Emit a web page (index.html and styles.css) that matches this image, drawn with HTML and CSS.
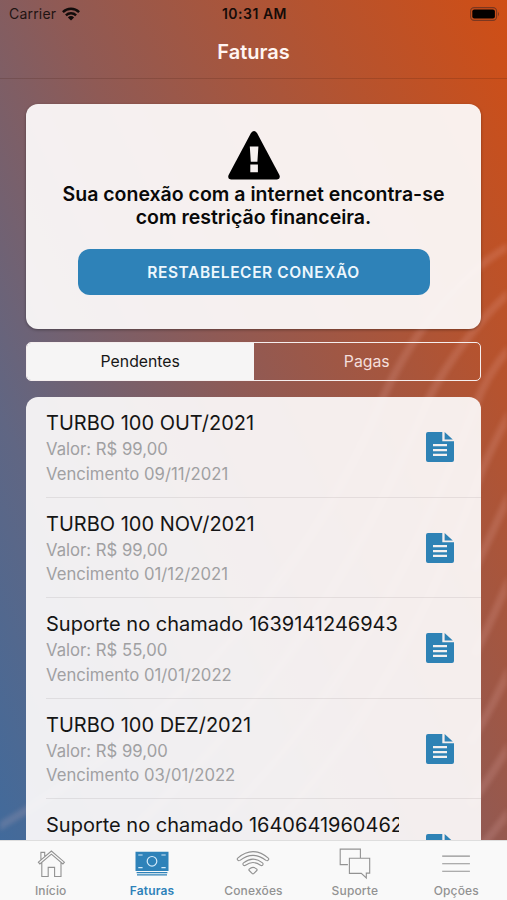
FILE: index.html
```html
<!DOCTYPE html>
<html lang="pt-BR">
<head>
<meta charset="utf-8">
<meta name="viewport" content="width=device-width, initial-scale=1">
<title>Faturas</title>
<link rel="stylesheet" href="styles.css">
</head>
<body>
<svg width="0" height="0" class="defs" aria-hidden="true">
  <symbol id="doc" viewBox="0 0 28 30">
    <path fill="currentColor" d="M2 0H16.3V9.3H28V28a2 2 0 0 1-2 2H2a2 2 0 0 1-2-2V2a2 2 0 0 1 2-2Z"/>
    <path fill="currentColor" d="M18.6 0 26.8 7.4H18.6Z"/>
    <path stroke="#f3f0f0" stroke-width="2.2" d="M7 13.2H21M7 18.1H21M7 22.9H21"/>
  </symbol>
</svg>
<div class="screen">
  <svg class="streaks" viewBox="0 0 507 900" aria-hidden="true">
    <path d="M515 243C470 265 415 325 382 400C340 500 240 690 -10 832"/>
    <path d="M515 288C485 312 448 360 428 400C370 540 280 700 120 840"/>
    <path d="M515 342C500 358 485 380 476 404C420 550 340 710 200 840"/>
    <path d="M515 403C501 430 490 450 480 475C430 610 370 730 260 840"/>
    <path d="M515 483C500 515 490 538 474 570"/>
    <path d="M515 567C500 600 490 625 474 655"/>
    <path d="M515 658C500 690 490 711 470 743"/>
    <path d="M515 736C500 762 488 780 470 805"/>
    <path d="M515 804C503 820 492 834 480 848"/>
  </svg>
  <header class="header">
    <div class="status">
      <span class="carrier">Carrier
        <svg class="wifi" viewBox="0 0 18 14"><g fill="none" stroke="#120c0b" stroke-width="2.4"><path d="M.9 5.1a11.6 11.6 0 0 1 16.2 0"/><path d="M3.9 8.3a7.2 7.2 0 0 1 10.2 0"/></g><path fill="#120c0b" d="M5.9 10.4a4.4 4.4 0 0 1 6.2 0L9 13.6Z"/></svg>
      </span>
      <span class="clock">10:31 AM</span>
      <span class="power"><svg class="battery" viewBox="0 0 30 14"><rect x=".6" y=".6" width="26" height="12.8" rx="3.6" fill="none" stroke="#7b3720" stroke-width="1.1"/><rect x="2.3" y="2.4" width="22.6" height="9.2" rx="2" fill="#050100"/><path fill="#7b3720" d="M28 4.7q2 2.3 0 4.6Z"/></svg></span>
    </div>
    <h1 class="title">Faturas</h1>
  </header>
  <main class="content">
    <section class="notice">
      <svg class="warn" viewBox="0 0 52 49"><path d="M23 2q3-4 6 0L51.4 44q1.5 4-2.4 4.5H3Q-.9 48 .6 44Z"/><path fill="#f5f0ef" d="M21.8 15.5h8.6l-1 15.3h-6.6ZM22.3 33.5h7.6v7.7h-7.6Z"/></svg>
      <p class="message">Sua conexão com a internet encontra-se<br>com restrição financeira.</p>
      <button class="action">RESTABELECER CONEXÃO</button>
    </section>
    <nav class="segments"><span class="segment selected">Pendentes</span><span class="segment">Pagas</span></nav>
    <ul class="invoices">
      <li class="invoice"><div class="info"><h2>TURBO 100 OUT/2021</h2><p>Valor: R$ 99,00</p><p>Vencimento 09/11/2021</p></div><svg class="doc"><use href="#doc"/></svg></li>
      <li class="invoice"><div class="info"><h2>TURBO 100 NOV/2021</h2><p>Valor: R$ 99,00</p><p>Vencimento 01/12/2021</p></div><svg class="doc"><use href="#doc"/></svg></li>
      <li class="invoice"><div class="info"><h2>Suporte no chamado 1639141246943</h2><p>Valor: R$ 55,00</p><p>Vencimento 01/01/2022</p></div><svg class="doc"><use href="#doc"/></svg></li>
      <li class="invoice"><div class="info"><h2>TURBO 100 DEZ/2021</h2><p>Valor: R$ 99,00</p><p>Vencimento 03/01/2022</p></div><svg class="doc"><use href="#doc"/></svg></li>
      <li class="invoice"><div class="info"><h2>Suporte no chamado 1640641960462</h2></div><svg class="doc"><use href="#doc"/></svg></li>
    </ul>
  </main>
  <nav class="tabs">
    <a class="tab"><svg viewBox="0 0 34 32"><path d="M7.8 14.6V28.5H14.2V19.4H20.6V28.5H27V14.6M4.4 14.2 17.4 3 30.4 14.2 28.9 16 17.4 6.2 5.9 16ZM6.9 12V4.4H10.7V8.8"/></svg><span>Início</span></a>
    <a class="tab active"><svg viewBox="0 0 34 32"><path class="solid" d="M.5 3.8h33v19.3H.5Z"/><path class="notes" d="M1.6 24.6H32.4M2 26.8H32"/><circle class="detail" cx="17" cy="13.3" r="4.8"/><path class="detail" d="M3.3 7H7.6M26.4 7H30.7M3.3 19.6H7.6M26.4 19.6H30.7"/></svg><span>Faturas</span></a>
    <a class="tab"><svg viewBox="0 0 34 32"><path d="M1.5 11.7Q.8 10.9 1.7 10.1Q17-2.8 32.3 10.1Q33.2 10.9 32.5 11.7Q31.5 13.3 30 12.4Q17 2.3 4 12.4Q2.5 13.3 1.5 11.7ZM7.2 16.8Q6.5 15.7 7.5 14.9Q17 7.4 26.5 14.9Q27.5 15.7 26.8 16.8Q25.8 18.1 24.5 17.2Q17 11.9 9.5 17.2Q8.2 18.1 7.2 16.8ZM13.2 21.2Q17 17.7 20.8 21.2Q21.4 21.9 20.8 22.5L17.7 25.6Q17 26.2 16.3 25.6L13.2 22.5Q12.6 21.9 13.2 21.2Z"/></svg><span>Conexões</span></a>
    <a class="tab"><svg viewBox="0 0 34 32"><path d="M9.9 16.6H2.2V1.1H22.4V9.9M11.4 10.3H31.7V25.1H28.3V30L23.3 25.4H11.4Z"/></svg><span>Suporte</span></a>
    <a class="tab"><svg viewBox="0 0 34 32"><path d="M3.2 8.1H30.9M3.2 15.7H30.9M3.2 23.2H30.9"/></svg><span>Opções</span></a>
  </nav>
</div>
</body>
</html>
```

FILE: styles.css
```css
* { box-sizing: border-box; margin: 0; padding: 0; }
body { font-family: Inter, "Liberation Sans", sans-serif; color: #151515; }
.defs { position: absolute; }
.screen {
  position: relative;
  display: flex;
  flex-direction: column;
  width: 507px;
  height: 900px;
  overflow: hidden;
  background: linear-gradient(64deg, #3d6b9f 0%, #606683 25%, #8f5a55 52%, #b5532f 79%, #d04e15 100%);
}
.streaks { position: absolute; inset: 0; width: 507px; height: 900px; fill: none; stroke: rgba(255, 200, 200, .15); stroke-width: 8; filter: blur(2px); }
.header { position: relative; height: 79px; border-bottom: 1px solid rgba(60, 20, 10, .18); }
.status { display: grid; grid-template-columns: 1fr auto 1fr; align-items: center; height: 27px; padding: 0 7px 0 9px; font-size: 14px; color: #1f1412; }
.carrier { display: flex; align-items: center; gap: 6px; letter-spacing: .2px; }
.wifi { width: 18px; height: 14px; }
.clock { font-weight: 600; font-size: 14px; letter-spacing: .5px; color: #150b08; }
.power { display: flex; justify-content: flex-end; }
.battery { width: 30px; height: 14px; }
.title { height: 50px; line-height: 50px; text-align: center; font-size: 20px; font-weight: 600; color: #fff5f2; }
.content { position: relative; flex: 1; min-height: 0; overflow: hidden; padding: 24.5px 26px 0; }
.notice { display: flex; flex-direction: column; align-items: center; height: 225.5px; padding-top: 27.5px; border-radius: 12px; background: rgba(252, 250, 250, .94); box-shadow: 0 1px 3px rgba(0, 0, 0, .35); }
.warn { width: 52px; height: 49px; }
.message { margin-top: 3px; text-align: center; font-size: 19.5px; line-height: 23px; font-weight: 600; color: #090909; white-space: nowrap; }
.action { width: 352px; height: 46px; margin-top: 20px; border: 0; border-radius: 12px; background: #2e82b8; color: #edf7fd; font: 600 15.5px Inter, sans-serif; letter-spacing: .6px; }
.segments { display: flex; height: 39px; margin-top: 13px; border: 1.5px solid #f5eeee; border-radius: 5px; overflow: hidden; font-size: 15.8px; }
.segment { flex: 1; display: flex; align-items: center; justify-content: center; padding-bottom: 1px; color: #f4dedb; }
.selected { color: #171717; background: #f6f5f5; }
.invoices { height: 600px; margin-top: 16px; padding-left: 20px; list-style: none; border-radius: 12px; background: rgba(252, 250, 250, .93); }
.invoice { display: flex; justify-content: space-between; height: 100.6px; padding: 13px 27px 0 0; border-bottom: 1px solid rgba(90, 80, 80, .11); }
.info { width: 353px; overflow: hidden; white-space: nowrap; }
.info h2 { font-size: 20px; line-height: 27px; font-weight: 400; color: #151515; }
.info p { font-size: 16.7px; line-height: 24.5px; color: #a0a0a2; }
.doc { width: 28px; height: 30px; margin-top: 22px; color: #2e82b5; }
.tabs { position: relative; display: grid; grid-template-columns: repeat(5, 1fr); height: 60px; border-top: 1px solid #dedede; background: #f9f9f9; }
.tab { display: flex; flex-direction: column; align-items: center; padding-top: 6.5px; color: #929292; font-size: 12px; letter-spacing: .15px; line-height: 15px; font-weight: 500; }
.tab svg { width: 34px; height: 32px; margin-bottom: 3.5px; fill: none; stroke: #929292; stroke-width: 1.1; }
.tab.active { color: #2e82b9; font-weight: 600; }
.tab .solid { fill: #2e82b9; stroke: none; }
.tab .notes { stroke: #2e82b9; stroke-width: 1.2; }
.tab .detail { stroke: #d4eafa; stroke-width: 1.2; }
```
